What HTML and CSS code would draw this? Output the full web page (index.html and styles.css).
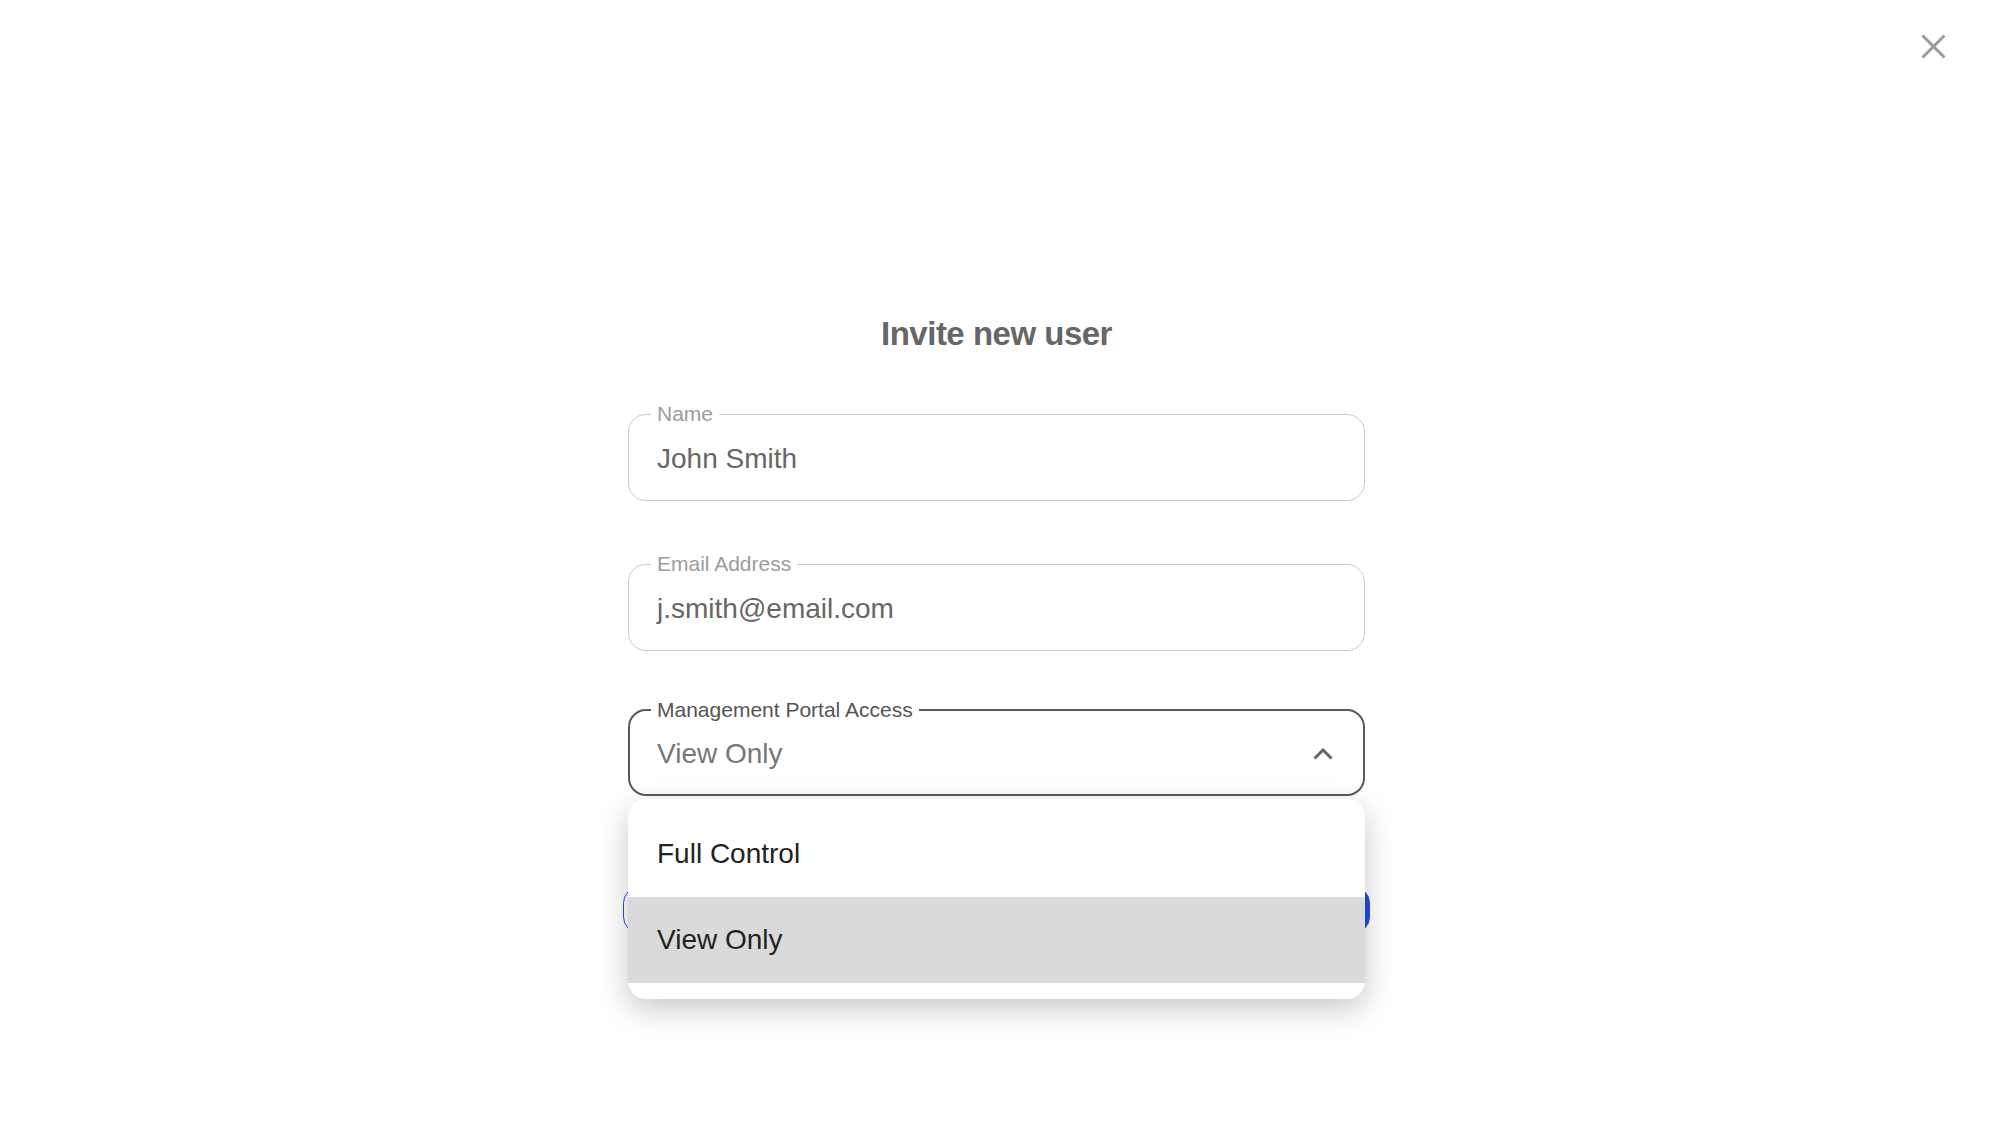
FILE: index.html
```html
<!DOCTYPE html>
<html lang="en">
<head>
    <meta charset="UTF-8">
    <meta name="viewport" content="width=device-width, initial-scale=1.0">
    <title>Invite new user</title>
    <link rel="stylesheet" href="styles.css">
</head>
<body>
    <div class="topbar">
        <button class="close-btn" aria-label="Close">
            <svg width="25" height="25" viewBox="0 0 25 25">
                <path d="M1.5 1.5 L23.5 23.5 M23.5 1.5 L1.5 23.5" stroke="#9a9a9a" stroke-width="3" fill="none"/>
            </svg>
        </button>
    </div>

    <div class="dialog">
        <h1 class="title">Invite new user</h1>

        <form class="invite-form">
            <fieldset class="field">
                <legend>Name</legend>
                <div class="value">John Smith</div>
            </fieldset>

            <fieldset class="field">
                <legend>Email Address</legend>
                <div class="value">j.smith@email.com</div>
            </fieldset>

            <div class="select-wrap">
                <fieldset class="field select open">
                    <legend>Management Portal Access</legend>
                    <div class="value">
                        <span>View Only</span>
                        <svg class="chevron" width="20" height="12" viewBox="0 0 20 12">
                            <path d="M1.5 10.5 L10 2 L18.5 10.5" stroke="#666" stroke-width="3" fill="none"/>
                        </svg>
                    </div>
                </fieldset>
                <ul class="menu">
                    <li class="menu-item">Full Control</li>
                    <li class="menu-item selected">View Only</li>
                </ul>
            </div>

            <div class="actions">
                <button type="button" class="btn btn-outline">Cancel</button>
                <button type="submit" class="btn btn-primary">Send Invite</button>
            </div>
        </form>
    </div>
</body>
</html>
```

FILE: styles.css
```css
html, body {
    min-height: 100vh;
}
body {
    margin: 0;
    font-family: "Liberation Sans", Arial, sans-serif;
    background-color: #FFFFFF;
    color: #666666;
}
.topbar {
    display: flex;
    justify-content: flex-end;
    padding: 34px 47px 0 0;
}
.close-btn {
    width: 25px;
    height: 25px;
    padding: 0;
    border: none;
    background: none;
    cursor: pointer;
}
.close-btn svg {
    display: block;
}
.dialog {
    width: 737px;
    margin: 255px auto 0;
    padding-bottom: 140px;
}
.title {
    margin: 0 0 48px;
    font-size: 33px;
    line-height: 40px;
    letter-spacing: -0.5px;
    font-weight: bold;
    text-align: center;
    color: #666666;
}
.invite-form {
    display: flex;
    flex-direction: column;
    gap: 51px;
}
.field {
    margin: 0;
    border: 1px solid #C9C9C9;
    border-radius: 18px;
    padding: 16px 28px 24px;
    min-width: 0;
}
.field legend {
    font-size: 21px;
    line-height: 24px;
    color: #9C9C9C;
    padding: 0 6px;
    margin-left: -6px;
}
.value {
    font-size: 28px;
    line-height: 34px;
    color: #666666;
}
.select-wrap {
    position: relative;
    margin-top: -4px;
}
.field.select {
    border: 2px solid #5A5A5A;
    padding: 15px 30px 23px 27px;
}
.field.select legend {
    color: #555555;
}
.field.select .value {
    display: flex;
    align-items: center;
    justify-content: space-between;
    color: #777777;
}
.chevron {
    display: block;
}
.menu {
    position: absolute;
    top: calc(100% + 3px);
    left: 0;
    right: 0;
    margin: 0;
    padding: 12px 0 16px;
    list-style: none;
    background-color: #FFFFFF;
    border-radius: 18px;
    box-shadow: 0 10px 30px rgba(0, 0, 0, 0.22);
    z-index: 10;
}
.menu-item {
    height: 86px;
    display: flex;
    align-items: center;
    padding-left: 29px;
    font-size: 28px;
    color: #222222;
}
.menu-item.selected {
    background-color: #DADADA;
}
.actions {
    display: flex;
    gap: 16px;
    margin: 40px -5px 0;
}
.btn {
    flex: 1;
    height: 46px;
    border-radius: 16px;
    font-family: inherit;
    font-size: 20px;
    cursor: pointer;
}
.btn-outline {
    background-color: #FFFFFF;
    border: 1px solid #2450DC;
    color: #2450DC;
}
.btn-primary {
    background-color: #1F4DDC;
    border: 1px solid #1F4DDC;
    color: #FFFFFF;
}
```
